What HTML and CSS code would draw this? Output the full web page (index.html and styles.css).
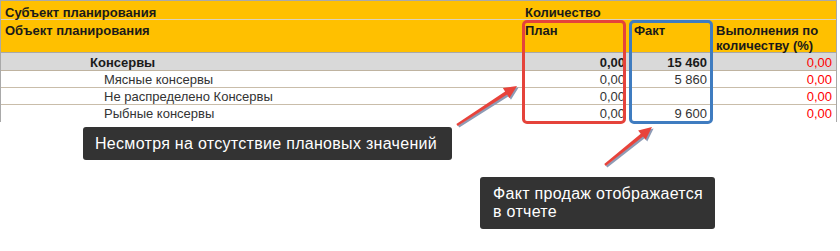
FILE: index.html
```html
<!DOCTYPE html>
<html lang="ru">
<head>
<meta charset="utf-8">
<link rel="stylesheet" href="styles.css">
</head>
<body>
<div class="page">
  <div class="grid">
    <div class="h1 c1">Субъект планирования</div>
    <div class="h1 span3">Количество</div>

    <div class="h2 c1">Объект планирования</div>
    <div class="h2 c2">План</div>
    <div class="h2 c3">Факт</div>
    <div class="h2 c4">Выполнения по количеству (%)</div>

    <div class="g c1 name-g">Консервы</div>
    <div class="g num p2">0,00</div>
    <div class="g num p3">15 460</div>
    <div class="g num p4 red">0,00</div>

    <div class="r c1 name-r">Мясные консервы</div>
    <div class="r num p2">0,00</div>
    <div class="r num p3">5 860</div>
    <div class="r num p4 red">0,00</div>

    <div class="r c1 name-r">Не распределено Консервы</div>
    <div class="r num p2">0,00</div>
    <div class="r num p3"></div>
    <div class="r num p4 red">0,00</div>

    <div class="r last c1 name-r">Рыбные консервы</div>
    <div class="r last num p2">0,00</div>
    <div class="r last num p3">9 600</div>
    <div class="r last num p4 red">0,00</div>
  </div>

  <div class="box box-red"></div>
  <div class="box box-blue"></div>

  <svg class="arrows" width="840" height="251" viewBox="0 0 840 251">
    <g fill="#8e9bb5" transform="translate(1.6,1.6)">
      <polygon points="457.65,126 507.08,94.61 509.37,98.13 517,86 502.83,88.07 505.12,91.59 456.35,124"/>
      <polygon points="605.75,165.93 643.02,136.58 645.66,139.85 652,127 638.12,130.51 640.76,133.78 604.25,164.07"/>
    </g>
    <g fill="#e8433b">
      <polygon points="457.65,126 507.08,94.61 509.37,98.13 517,86 502.83,88.07 505.12,91.59 456.35,124"/>
      <polygon points="605.75,165.93 643.02,136.58 645.66,139.85 652,127 638.12,130.51 640.76,133.78 604.25,164.07"/>
    </g>
  </svg>

  <div class="tip tip1">Несмотря на отсутствие плановых значений</div>
  <div class="tip tip2">Факт продаж отображается<br>в отчете</div>
</div>
</body>
</html>
```

FILE: styles.css
```css
html, body {
  margin: 0;
  padding: 0;
  background: #ffffff;
}

.page {
  position: relative;
  width: 840px;
  height: 251px;
  overflow: hidden;
  font-family: "Liberation Sans", Arial, sans-serif;
}

.grid {
  display: grid;
  grid-template-columns: 521px 106px 83px 125px;
  width: 835px;
  border-top: 1px solid #a9a9a9;
  border-left: 1px solid #a9a9a9;
  border-right: 1px solid #a9a9a9;
  font-size: 13px;
  line-height: 14px;
  color: #262626;
}

.h1 {
  background: #ffc000;
  box-sizing: border-box;
  padding-top: 5px;
  border-bottom: 1px solid #ddd3bb;
  height: 19px;
  font-weight: bold;
  color: #1a1a1a;
  white-space: nowrap;
}

.span3 {
  grid-column: 2 / 5;
  padding-left: 3px;
}

.h2 {
  background: #ffc000;
  height: 33px;
  box-sizing: border-box;
  padding-top: 4px;
  border-bottom: 1px solid #a9a9a9;
  font-weight: bold;
  color: #1a1a1a;
}

.c1 { padding-left: 4px; }
.h2.c2 { padding-left: 3px; }
.h2.c3 { padding-left: 6px; }
.h2.c4 { padding-left: 5px; padding-right: 2px; line-height: 14.5px; }

.g {
  background: #d9d9d9;
  height: 18px;
  box-sizing: border-box;
  padding-top: 3px;
  border-bottom: 1px solid #bfb3a0;
  font-weight: bold;
  color: #1a1a1a;
}

.r {
  height: 17px;
  box-sizing: border-box;
  padding-top: 2px;
  border-bottom: 1px solid #c9bdaa;
  color: #333333;
}

.r.last { border-bottom: none; }

.name-g { padding-left: 89px; }
.name-r { padding-left: 103px; }

.num { text-align: right; white-space: nowrap; }
.p2 { padding-right: 3px; }
.p3 { padding-right: 4px; }
.p4 { padding-right: 4px; }

.red { color: #ff0000; font-weight: normal; }
.g.red { font-weight: normal; }

.box {
  position: absolute;
  top: 20px;
  height: 104px;
  box-sizing: border-box;
  border-radius: 5px;
  border: 3px solid;
}

.box-red {
  left: 522px;
  width: 104px;
  border-color: #e5433b;
}

.box-blue {
  left: 629px;
  width: 84px;
  border-color: #3f7cc0;
}

.arrows {
  position: absolute;
  left: 0;
  top: 0;
}

.tip {
  position: absolute;
  background: #333333;
  color: #ffffff;
  border-radius: 3px;
  font-size: 16px;
  letter-spacing: 0.3px;
  line-height: 18px;
  box-sizing: border-box;
  white-space: nowrap;
}

.tip1 {
  left: 83px;
  top: 127px;
  width: 369px;
  height: 33px;
  padding: 8px 0 0 12px;
}

.tip2 {
  left: 480px;
  top: 177px;
  width: 235px;
  height: 52px;
  padding: 8px 0 0 13px;
}
```
